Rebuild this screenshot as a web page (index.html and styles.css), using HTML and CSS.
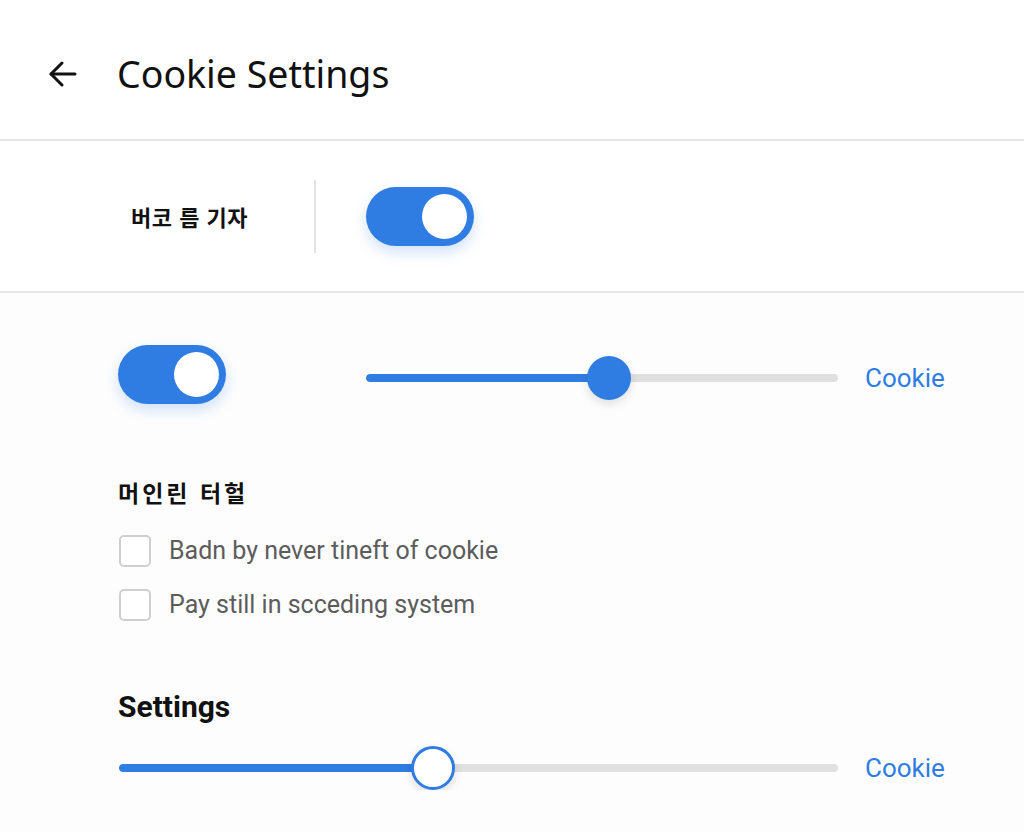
FILE: index.html
```html
<!DOCTYPE html>
<html lang="ko">
<head>
  <meta charset="UTF-8">
  <meta name="viewport" content="width=device-width, initial-scale=1.0">
  <title>Cookie Settings</title>
  <link rel="stylesheet" href="styles.css">
</head>
<body>
  <header class="topbar">
    <button class="back" aria-label="Back">
      <svg width="32" height="32" viewBox="0 0 32 32" fill="none" stroke="#111" stroke-width="3" stroke-linecap="round" stroke-linejoin="round">
        <path d="M28 16H4"/>
        <path d="M15 5L4 16l11 11"/>
      </svg>
    </button>
    <h1>Cookie Settings</h1>
  </header>

  <section class="master">
    <div class="master-label">버코 름 기자</div>
    <div class="divider"></div>
    <div class="toggle on"><span class="knob"></span></div>
  </section>

  <main class="panel">
    <div class="row">
      <div class="toggle on"><span class="knob"></span></div>
      <div class="slider short">
        <div class="track"><div class="fill" style="width: 51.5%"></div></div>
        <span class="thumb solid" style="left: 51.5%"></span>
      </div>
      <a class="link" href="#">Cookie</a>
    </div>

    <h2 class="group-title">머인린 터헐</h2>
    <label class="check"><span class="box"></span>Badn by never tineft of cookie</label>
    <label class="check"><span class="box"></span>Pay still in scceding system</label>

    <h2 class="settings-title">Settings</h2>
    <div class="row slim">
      <div class="slider long">
        <div class="track"><div class="fill" style="width: 43.7%"></div></div>
        <span class="thumb ring" style="left: 43.7%"></span>
      </div>
      <a class="link" href="#">Cookie</a>
    </div>
  </main>
</body>
</html>
```

FILE: styles.css
```css
body {
  margin: 0;
  background-color: #fdfdfd;
  color: #111;
  font-family: Roboto, "Noto Sans", "Noto Sans CJK KR", sans-serif;
}

.topbar {
  height: 139px;
  display: flex;
  align-items: center;
  padding-left: 47px;
  background-color: #fff;
  border-bottom: 2px solid #e6e6e6;
}

.back {
  background: none;
  border: none;
  padding: 0;
  width: 32px;
  height: 32px;
  margin: 8px 38px 0 0;
  cursor: pointer;
}

.topbar h1 {
  margin: 8px 0 0;
  font-family: "Noto Sans", sans-serif;
  font-weight: 400;
  font-size: 37.5px;
  color: #111;
}

.master {
  height: 150px;
  display: flex;
  align-items: center;
  padding-left: 131px;
  background-color: #fff;
  border-bottom: 2px solid #e6e6e6;
}

.master-label {
  width: 183px;
  white-space: nowrap;
  font-family: "Noto Sans CJK KR", sans-serif;
  font-weight: 700;
  font-size: 22px;
  letter-spacing: 0.5px;
}

.divider {
  width: 2px;
  height: 73px;
  background-color: #e2e2e2;
  margin-right: 50px;
}

.toggle {
  width: 108px;
  height: 59px;
  border-radius: 30px;
  background-color: #ddd;
  position: relative;
  flex-shrink: 0;
}

.toggle.on {
  background-color: #2f7de2;
  box-shadow: 0 6px 14px rgba(47, 125, 226, 0.22);
}

.toggle .knob {
  position: absolute;
  top: 7px;
  right: 7px;
  width: 45px;
  height: 45px;
  border-radius: 50%;
  background-color: #fff;
}

.panel {
  padding: 52px 0 0 118px;
}

.row {
  display: flex;
  align-items: center;
  height: 59px;
}

.row.slim {
  height: 44px;
  margin-top: 21px;
}

.slider {
  position: relative;
  height: 44px;
  display: flex;
  align-items: center;
}

.slider.short {
  width: 472px;
  margin: 6px 0 0 140px;
}

.slider.long {
  width: 719px;
  margin-left: 1px;
}

.short + .link {
  margin-top: 6px;
}

.track {
  width: 100%;
  height: 8px;
  border-radius: 4px;
  background-color: #e0e0e0;
  overflow: hidden;
}

.fill {
  height: 100%;
  background-color: #2f7de2;
  border-radius: 4px;
}

.thumb {
  position: absolute;
  top: 0;
  width: 44px;
  height: 44px;
  margin-left: -22px;
  border-radius: 50%;
  box-sizing: border-box;
  box-shadow: 0 4px 10px rgba(0, 0, 0, 0.12);
}

.thumb.solid {
  background-color: #2f7de2;
}

.thumb.ring {
  background-color: #fff;
  border: 3px solid #2f7de2;
}

.link {
  margin-left: 27px;
  font-size: 26px;
  color: #2f7de2;
  text-decoration: none;
}

.group-title {
  margin: 73px 0 0;
  font-family: "Noto Sans CJK KR", sans-serif;
  font-weight: 700;
  font-size: 23px;
  letter-spacing: 3px;
  line-height: 30px;
}

.check {
  display: flex;
  align-items: center;
  height: 31px;
  font-size: 25px;
  color: #5c5c5c;
  margin-top: 28px;
}

.check + .check {
  margin-top: 23px;
}

.box {
  width: 28px;
  height: 28px;
  margin: 0 18px 0 1px;
  border: 2px solid #cfcfcf;
  border-radius: 5px;
  background-color: #fff;
}

.settings-title {
  margin: 69px 0 0;
  font-weight: 700;
  font-size: 30px;
  line-height: 36px;
}
```
